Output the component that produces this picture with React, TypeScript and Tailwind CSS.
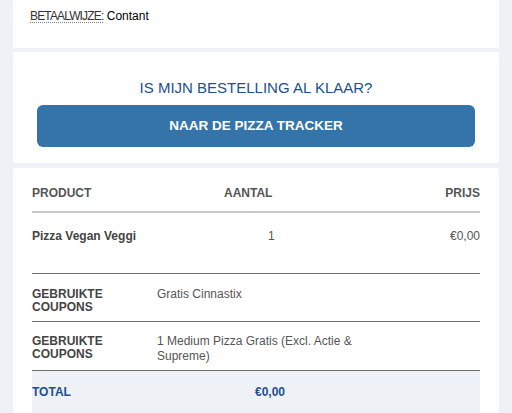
export default function App() {
  return (
    <div className="h-[413px] w-[512px] overflow-hidden bg-[#eef1f5] font-['Liberation_Sans',Arial,sans-serif]">
      {/* Payment card */}
      <div className="mx-[13px] bg-white pl-[17px] pt-[9px] pb-[25px]">
        <p className="text-[12px] leading-[14px] text-black">
          <abbr className="text-[12px] tracking-[-0.85px] text-[#333] underline decoration-dotted decoration-[#888] underline-offset-2">
            BETAALWIJZE:
          </abbr>{" "}
          Contant
        </p>
      </div>

      {/* Tracker card */}
      <div className="mx-[13px] mt-[4px] bg-white px-[24px] pt-[26px] pb-[16px]">
        <h2 className="text-center text-[15px] leading-[20px] text-[#1d4f91]">
          IS MIJN BESTELLING AL KLAAR?
        </h2>
        <button className="mt-[7px] flex h-[42px] w-full items-center justify-center rounded-[6px] bg-[#3474a8] text-[13.5px] font-bold text-white">
          NAAR DE PIZZA TRACKER
        </button>
      </div>

      {/* Order table */}
      <div className="mx-[13px] mt-[5px] bg-white px-[19px] pt-[18px]">
        <div className="grid grid-cols-[192px_1fr_1fr] border-b-2 border-[#c8c8c8] pb-[11px] text-[12px] font-bold leading-[14px] text-[#555]">
          <span>PRODUCT</span>
          <span>AANTAL</span>
          <span className="text-right">PRIJS</span>
        </div>
        <div className="grid grid-cols-[192px_1fr_1fr] border-b border-[#6d6d6d] pt-[16px] pb-[30px] text-[12px] leading-[14px] text-[#555]">
          <span className="font-bold text-[#444]">Pizza Vegan Veggi</span>
          <span className="pl-[44px]">1</span>
          <span className="text-right">€0,00</span>
        </div>
        <div className="grid grid-cols-[125px_210px] border-b border-[#6d6d6d] pt-[14px] pb-[8px]">
          <span className="text-[12px] font-bold leading-[12.5px] text-[#444]">
            GEBRUIKTE
            <br />
            COUPONS
          </span>
          <span className="-mt-[1px] text-[12px] leading-[15px] text-[#555]">Gratis Cinnastix</span>
        </div>
        <div className="grid grid-cols-[125px_210px] border-b border-[#6d6d6d] pt-[13px] pb-[6px]">
          <span className="text-[12px] font-bold leading-[12.5px] text-[#444]">
            GEBRUIKTE
            <br />
            COUPONS
          </span>
          <span className="-mt-[1px] text-[12px] leading-[15px] text-[#555]">
            1 Medium Pizza Gratis (Excl. Actie &amp; Supreme)
          </span>
        </div>
        <div className="grid grid-cols-[223px_1fr] bg-[#eef1f5] pt-[14px] pb-[20px] text-[12px] font-bold leading-[14px] text-[#1f4f8f]">
          <span>TOTAL</span>
          <span>€0,00</span>
        </div>
      </div>
    </div>
  );
}
